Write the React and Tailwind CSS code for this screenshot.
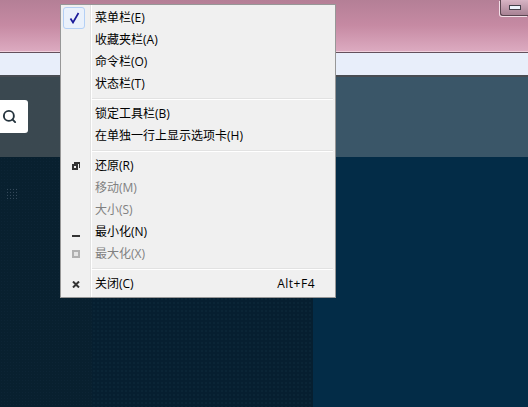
import React from 'react';
import { Search } from 'lucide-react';

const grupos = [
  [
    { texto: '菜单栏(E)', marcado: true },
    { texto: '收藏夹栏(A)' },
    { texto: '命令栏(O)' },
    { texto: '状态栏(T)' },
  ],
  [
    { texto: '锁定工具栏(B)' },
    { texto: '在单独一行上显示选项卡(H)' },
  ],
  [
    { texto: '还原(R)', icone: 'restaurar' },
    { texto: '移动(M)', inativo: true },
    { texto: '大小(S)', inativo: true },
    { texto: '最小化(N)', icone: 'minimizar' },
    { texto: '最大化(X)', icone: 'maximizar', inativo: true },
  ],
  [
    { texto: '关闭(C)', icone: 'fechar', atalho: 'Alt+F4' },
  ],
];

function IconeMenu({ tipo }) {
  if (tipo === 'restaurar') {
    return (
      <svg width="8" height="8" viewBox="0 0 8 8" className="text-[#333]">
        <path d="M2 0h6v6H7V2H2z" fill="currentColor" />
        <path fillRule="evenodd" d="M0 2h6v6H0zM2 4v2h2V4z" fill="currentColor" />
      </svg>
    );
  }
  if (tipo === 'minimizar') return <div className="w-2 h-0.5 mt-[8px] bg-[#333]"></div>;
  if (tipo === 'maximizar') return <div className="w-2 h-2 border-2 border-[#b0b0b0] bg-[#e4e4e4]"></div>;
  return (
    <svg width="8" height="7" viewBox="0 0 8 7" className="text-[#333] mt-[1px]">
      <path d="M1 0.5l6 6M7 0.5l-6 6" stroke="currentColor" strokeWidth="2" fill="none" />
    </svg>
  );
}

function ItemMenu({ item }) {
  return (
    <div className={`flex items-center h-[22px] ${item.inativo ? 'text-[#808080]' : 'text-black'}`}>
      <div className="w-[28px] h-[22px] shrink-0 flex items-center justify-center">
        {item.marcado && (
          <div className="w-[22px] h-[22px] shrink-0 mr-[4px] flex items-center justify-center rounded-[3px] border border-[#b4d0f5] bg-[#eaf1fb]">
            <svg width="11" height="12" viewBox="0 0 11 12" className="text-[#1a1a9a]">
              <path d="M1.5 6.5L4 10.5L9.5 1" stroke="currentColor" strokeWidth="1.7" fill="none" />
            </svg>
          </div>
        )}
        {item.icone && <IconeMenu tipo={item.icone} />}
      </div>
      <span className="ml-[5px] flex-1">{item.texto}</span>
      {item.atalho && <span className="mr-[19px] tracking-[0.5px]">{item.atalho}</span>}
    </div>
  );
}

export default function App() {
  return (
    <div className="relative w-[528px] h-[407px] overflow-hidden flex flex-col font-['Open_Sans','Noto_Sans_CJK_SC',sans-serif] text-[12px]">
      {/* barra de titulo */}
      <div className="h-[52px] shrink-0 flex justify-end bg-gradient-to-b from-[#b47f96] via-[#c68aa3] to-[#dcaac0] border-b border-[#f0d0dc]">
        <div className="w-[28px] h-[16px] flex items-center justify-center rounded-bl-[3px] border-l border-b border-[#5a4650] bg-gradient-to-b from-[#d8b4c4] to-[#a88294] shadow-[-1px_1px_0_#f3dfe8]">
          <div className="w-[12px] h-[5px] bg-[#eef2fb] border border-[#44404a]"></div>
        </div>
      </div>
      {/* barra de endereco */}
      <div className="h-[25px] shrink-0 bg-[#e8eefa] border-t border-b-2 border-t-[#64505c] border-b-[#484c52]"></div>
      {/* cabecalho */}
      <div className="h-[80px] shrink-0 flex items-center bg-gradient-to-r from-[#3a4850] from-[12%] to-[#3a5668] to-[60%]">
        <div className="w-[28px] h-[33px] flex items-center pl-[2px] rounded-r-[3px] bg-white mt-[-1px]">
          <Search size={15} strokeWidth={3} className="text-[#24333d]" />
        </div>
      </div>
      {/* fundo */}
      <div className="flex-1 flex bg-[#032c47]">
        <div className="w-[92px] pl-[6px] pt-[31px] bg-[#08202f] bg-[radial-gradient(#0c2435_1px,transparent_1px)] bg-[length:3px_3px]">
          <div className="w-[12px] h-[11px] bg-[radial-gradient(#34495a_1px,transparent_1px)] bg-[length:3px_3px]"></div>
        </div>
        <div className="w-[221px] bg-[#061f30] bg-[radial-gradient(#0a2536_1px,transparent_1px)] bg-[length:4px_4px]"></div>
      </div>

      {/* menu de contexto */}
      <div className="absolute left-[60px] top-[4px] w-[276px] h-[294px] flex flex-col border border-[#979797] bg-[#f0f0f0] pl-[1px] pr-[1px] pt-[2px]">
        <div className="absolute left-[29px] top-0 bottom-0 w-[2px] bg-[#e2e2e2] border-r border-white"></div>
        {grupos.map((grupo, i) => (
          <div key={i} className="relative">
            {i > 0 && <div className="ml-[30px] mr-[1px] my-[3px] h-[2px] bg-[#e2e2e2] border-b border-white"></div>}
            {grupo.map((item) => <ItemMenu key={item.texto} item={item} />)}
          </div>
        ))}
      </div>
    </div>
  );
}
